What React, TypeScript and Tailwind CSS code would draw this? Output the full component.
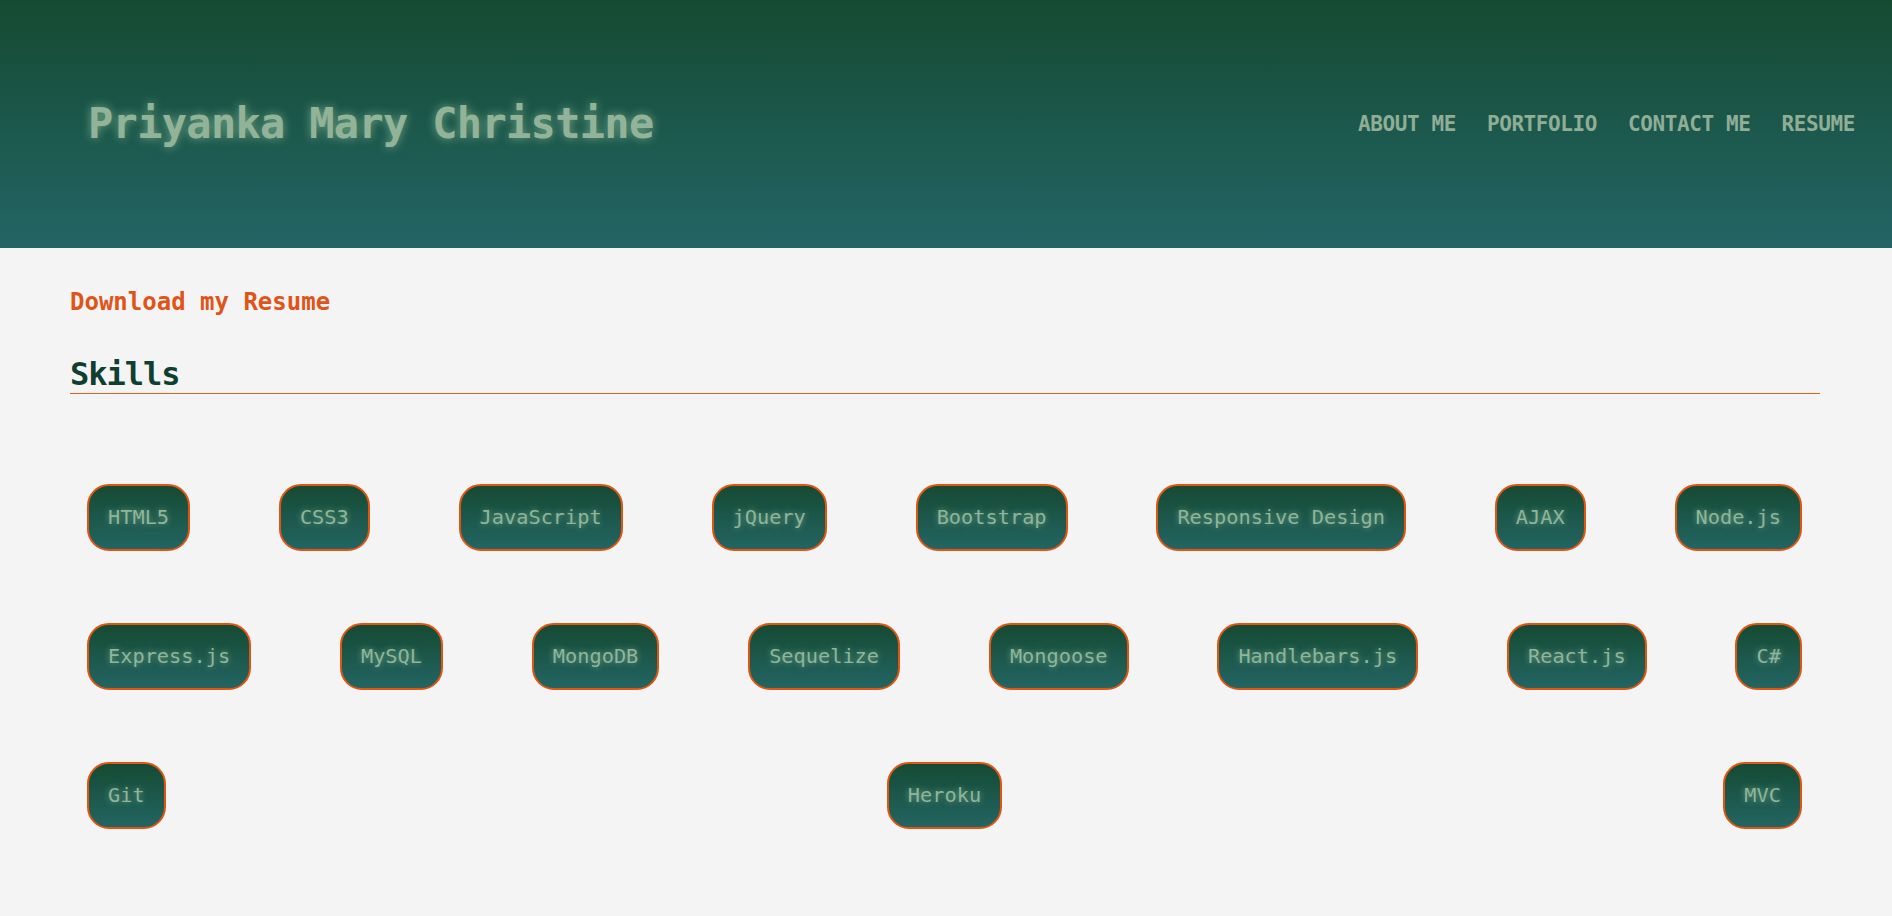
const rows: string[][] = [
  ["HTML5", "CSS3", "JavaScript", "jQuery", "Bootstrap", "Responsive Design", "AJAX", "Node.js"],
  ["Express.js", "MySQL", "MongoDB", "Sequelize", "Mongoose", "Handlebars.js", "React.js", "C#"],
  ["Git", "Heroku", "MVC"],
];

const mono = "font-['DejaVu_Sans_Mono','Liberation_Mono',monospace]";

function Skill({ name }: { name: string }) {
  return (
    <div className="h-[67px] flex items-center px-[19px] rounded-[22px] border-2 border-[#e0550f] bg-gradient-to-b from-[#164a33] to-[#236563]">
      <span className="text-[20.3px] text-[#90b59b] [text-shadow:0_0_6px_rgba(160,210,170,0.6)]">{name}</span>
    </div>
  );
}

export default function App() {
  return (
    <div className={`min-h-screen bg-[#f4f4f4] ${mono}`}>
      <header className="h-[248px] flex items-center justify-between pl-[88px] pr-[37px] bg-gradient-to-b from-[#154a32] to-[#236565]">
        <h1 className="-mt-[2px] text-[42px] font-bold tracking-[-0.7px] text-[#93b398] [text-shadow:0_0_10px_rgba(170,215,170,0.6)]">
          Priyanka Mary Christine
        </h1>
        <nav className="flex gap-[31px] mt-[2px] text-[21px] font-bold tracking-[-0.4px] text-[#8fae95]">
          <a href="#">ABOUT ME</a>
          <a href="#">PORTFOLIO</a>
          <a href="#">CONTACT ME</a>
          <a href="#">RESUME</a>
        </nav>
      </header>

      <main className="pl-[70px] pr-[72px] pt-[40px] pb-[60px]">
        <a href="#" className="block text-[24px] leading-[28px] font-bold text-[#e0541a]">
          Download my Resume
        </a>
        <h2 className="mt-[39px] text-[32px] leading-[38px] font-bold tracking-[-1px] text-[#0f3f30] border-b border-[#e0621f]">
          Skills
        </h2>
        <div className="mt-[90px] flex flex-col gap-[72px] pl-[17px] pr-[18px]">
          {rows.map((row, i) => (
            <div key={i} className="flex justify-between">
              {row.map((s) => (
                <Skill key={s} name={s} />
              ))}
            </div>
          ))}
        </div>
      </main>
    </div>
  );
}
